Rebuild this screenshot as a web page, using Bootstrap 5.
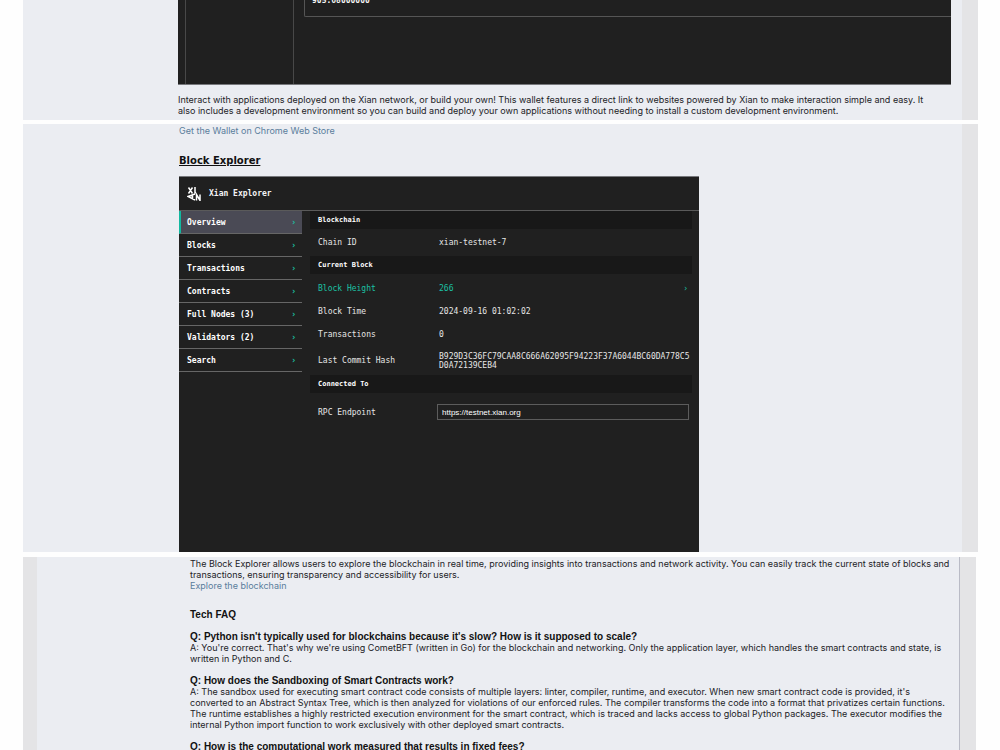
<!DOCTYPE html>
<html lang="en">
<head>
<meta charset="utf-8">
<meta name="viewport" content="width=device-width, initial-scale=1">
<title>Xian – Wallet, Block Explorer and Tech FAQ</title>
<link href="https://cdn.jsdelivr.net/npm/bootstrap@5.3.0/dist/css/bootstrap.min.css" rel="stylesheet">
<style>
  body { background: #fefefe; color: #222226; font: 9px/11px Inter, sans-serif; }
  a { color: #5a7d9c; text-decoration: none; }
  .post { margin: 0 22px 4px 23px; background: #ebedf2; border-right: 16px solid #e4e4e6; padding-left: 156px; }
  .post p { margin: 0; }
  .post-wallet { padding-left: 155px; }
  .post-explorer { padding-top: 1px; }
  .post-faq { border-left: 14px solid #e4e4e6; padding-left: 153px; margin-top: 5px; margin-right: 24px; }
  .post-faq .inner { border-right: 1px solid #b9bbc6; padding-top: 1px; }
  h2 { font: 700 10px/14px "DejaVu Sans", sans-serif; color: #111; margin: 18px 0 8px; }
  h3 { font: 700 10px/11px "Liberation Sans", sans-serif; color: #111; margin: 11px 0 0; }
  .faq-title { margin-top: 18px; }
  .mono { font-family: "DejaVu Sans Mono", monospace; font-size: 8px; line-height: 9px; color: #f4f4f4; }
  .shot { background: #202020; }
  .wallet { height: 85px; margin: 0 11px 9px 0; border-bottom: 1px solid #77787c; }
  .wallet-rail { width: 8px; border-right: 1px solid #484848; }
  .wallet-side { width: 108px; border-right: 1px solid #484848; }
  .wallet-box { height: 17px; margin-left: 10px; padding: 0 0 11px 7px; border: 1px solid #555; border-width: 0 0 1px 1px; border-bottom-left-radius: 2px; }
  .explorer { width: 520px; min-height: 376px; border-top: 1px solid #77787c; }
  .explorer-head { height: 34px; border-bottom: 1px solid #5a5a5a; padding-left: 8px; }
  .side { width: 123px; }
  .side a { height: 23px; padding: 0 6px 0 8px; color: #fff; border-bottom: 1px solid #666; }
  .side a.active { background: #4a4a55; border-left: 2px solid #12b8a0; padding-left: 6px; }
  .teal, .data .teal td, .data .teal th { color: #1bc0a4; }
  .data { width: 382px; margin: 0 7px 0 8px; table-layout: fixed; color: #e6e6e6; }
  .data th, .data td { height: 23px; padding: 0 0 0 8px; vertical-align: middle; font-weight: 400; }
  .data .band th { height: 18px; background: #181818; font-size: 7px; font-weight: 700; color: #fff; }
  .data .tall > * { height: 27px; }
  .data .first > * { height: 26px; padding-top: 3px; }
  .data .hash > * { height: 29px; }
  .data .field > * { height: 38px; }
  .label-col { width: 121px; }
  .data input { width: 252px; height: 16px; margin-left: -2px; padding: 0 4px; background: #202020; border: 1px solid #5c5c5c; color: #fff; font: 8px "Liberation Sans", sans-serif; display: block; }
</style>
</head>
<body>
<main class="vh-100 overflow-hidden">
  <section class="post post-wallet pb-1">
    <div class="wallet shot mono d-flex overflow-hidden">
      <div class="wallet-rail"></div>
      <div class="wallet-side"></div>
      <div class="wallet-box flex-grow-1 d-flex flex-column justify-content-end fw-bold"><span>905.68000000</span></div>
    </div>
    <p>Interact with applications deployed on the Xian network, or build your own! This wallet features a direct link to websites powered by Xian to make interaction simple and easy. It<br>also includes a development environment so you can build and deploy your own applications without needing to install a custom development environment.</p>
  </section>

  <section class="post post-explorer">
    <p><a href="#">Get the Wallet on Chrome Web Store</a></p>
    <h2 class="text-decoration-underline">Block Explorer</h2>
    <div class="explorer shot mono">
      <header class="explorer-head d-flex align-items-center fw-bold">
        <svg class="me-2" width="14" height="14" viewBox="0 0 14 14" fill="none" stroke="#fff" stroke-width="1.5" aria-hidden="true"><path d="M1.500 .5l4 6M5.500 .5l-4 6M8 0v6.500M8 7 1 9.500l7 3.500M5.500 8v4M9.500 13.500V7.500l3.500 6v-6"/></svg>
        <span>Xian Explorer</span>
      </header>
      <div class="d-flex align-items-start">
        <nav class="side d-flex flex-column fw-bold">
          <a class="active d-flex align-items-center justify-content-between" href="#">Overview <span class="teal">›</span></a>
          <a class="d-flex align-items-center justify-content-between" href="#">Blocks <span class="teal">›</span></a>
          <a class="d-flex align-items-center justify-content-between" href="#">Transactions <span class="teal">›</span></a>
          <a class="d-flex align-items-center justify-content-between" href="#">Contracts <span class="teal">›</span></a>
          <a class="d-flex align-items-center justify-content-between" href="#">Full Nodes (3) <span class="teal">›</span></a>
          <a class="d-flex align-items-center justify-content-between" href="#">Validators (2) <span class="teal">›</span></a>
          <a class="d-flex align-items-center justify-content-between" href="#">Search <span class="teal">›</span></a>
        </nav>
        <table class="data">
          <colgroup><col class="label-col"><col></colgroup>
          <tbody>
            <tr class="band"><th colspan="2">Blockchain</th></tr>
            <tr class="tall"><th>Chain ID</th><td>xian-testnet-7</td></tr>
            <tr class="band"><th colspan="2">Current Block</th></tr>
            <tr class="teal first"><th>Block Height</th><td><div class="d-flex justify-content-between pe-1"><span>266</span><span>›</span></div></td></tr>
            <tr><th>Block Time</th><td>2024-09-16 01:02:02</td></tr>
            <tr><th>Transactions</th><td>0</td></tr>
            <tr class="hash"><th>Last Commit Hash</th><td>B929D3C36FC79CAA8C666A62095F94223F37A6044BC60DA778C5<br>D0A72139CEB4</td></tr>
            <tr class="band"><th colspan="2">Connected To</th></tr>
            <tr class="field"><th><label for="rpc">RPC Endpoint</label></th><td><input id="rpc" type="text" value="https://testnet.xian.org"></td></tr>
          </tbody>
        </table>
      </div>
    </div>
  </section>

  <section class="post post-faq">
    <div class="inner">
      <p>The Block Explorer allows users to explore the blockchain in real time, providing insights into transactions and network activity. You can easily track the current state of blocks and<br>transactions, ensuring transparency and accessibility for users.</p>
      <p><a href="#">Explore the blockchain</a></p>
      <h3 class="faq-title">Tech FAQ</h3>
      <h3>Q: Python isn't typically used for blockchains because it's slow? How is it supposed to scale?</h3>
      <p>A: You're correct. That's why we're using CometBFT (written in Go) for the blockchain and networking. Only the application layer, which handles the smart contracts and state, is<br>written in Python and C.</p>
      <h3>Q: How does the Sandboxing of Smart Contracts work?</h3>
      <p>A: The sandbox used for executing smart contract code consists of multiple layers: linter, compiler, runtime, and executor. When new smart contract code is provided, it's<br>converted to an Abstract Syntax Tree, which is then analyzed for violations of our enforced rules. The compiler transforms the code into a format that privatizes certain functions.<br>The runtime establishes a highly restricted execution environment for the smart contract, which is traced and lacks access to global Python packages. The executor modifies the<br>internal Python import function to work exclusively with other deployed smart contracts.</p>
      <h3>Q: How is the computational work measured that results in fixed fees?</h3>
    </div>
  </section>
</main>
<script src="https://cdn.jsdelivr.net/npm/bootstrap@5.3.0/dist/js/bootstrap.bundle.min.js"></script>
</body>
</html>
